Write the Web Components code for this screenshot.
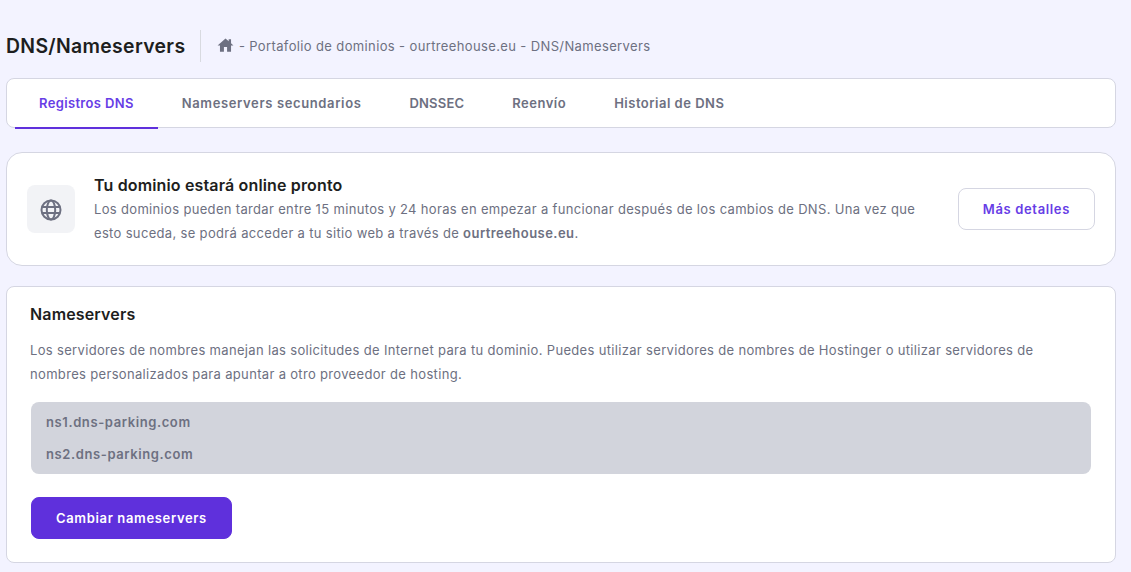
<!DOCTYPE html>
<html lang="es">
<head>
<meta charset="utf-8">
<title>DNS/Nameservers</title>
<style>
html, body { margin: 0; height: 572px; overflow: hidden; background: #f3f3ff; }
body { font-family: Inter, "Noto Sans", sans-serif; color: #6d7081; }
</style>
</head>
<body>
<dns-page></dns-page>

<script>
const FONT = 'Inter, "Noto Sans", sans-serif';

class PageHeader extends HTMLElement {
  constructor() {
    super();
    this.attachShadow({mode: 'open'});
    this.shadowRoot.innerHTML = `
<style>
:host { display: flex; align-items: center; height: 32px; padding-left: 6px; font-family: ${FONT}; }
h1 { margin: 0; font-size: 19.4px; font-weight: 600; letter-spacing: .33px; color: #1d1e20; white-space: nowrap; }
.sep { width: 1px; height: 32px; background: #d8dae0; margin: 0 14.5px 0 15px; }
svg { width: 19px; height: 19px; fill: #6d7081; display: block; margin-right: 4px; margin-top: -2px; }
.crumbs { font-size: 13px; letter-spacing: .37px; color: #6d7081; white-space: nowrap; }
</style>
<h1><slot name="title"></slot></h1>
<div class="sep"></div>
<svg viewBox="0 0 24 24"><path d="M19 9.3V4h-3v2.6L12 3 2 12h3v8h5v-6h4v6h5v-8h3l-3-2.7z"/></svg>
<span class="crumbs"><slot></slot></span>`;
  }
}

class TabBar extends HTMLElement {
  constructor() {
    super();
    this.attachShadow({mode: 'open'});
    this.shadowRoot.innerHTML = `
<style>
:host { display: flex; height: 48px; padding: 0 8px; background: #fff; border: 1px solid #d5d6e2; border-radius: 8px; font-family: ${FONT}; }
</style>
<slot></slot>`;
  }
}

class TabItem extends HTMLElement {
  constructor() {
    super();
    this.attachShadow({mode: 'open'});
    this.shadowRoot.innerHTML = `
<style>
:host { display: flex; align-items: center; justify-content: center; padding: 0 24px; box-sizing: border-box; height: 50px; font-size: 13px; font-weight: 600; letter-spacing: .5px; color: #6d7081; white-space: nowrap; border-bottom: 2px solid transparent; }
:host([active]) { color: #673de6; border-bottom-color: #5f30dc; }
</style>
<slot></slot>`;
  }
}

class NoticeCard extends HTMLElement {
  constructor() {
    super();
    this.attachShadow({mode: 'open'});
    this.shadowRoot.innerHTML = `
<style>
:host { display: flex; align-items: center; box-sizing: border-box; height: 114px; padding: 0 20px; background: #fff; border: 1px solid #d5d6e2; border-radius: 16px; font-family: ${FONT}; }
.icon { flex: none; width: 48px; height: 48px; border-radius: 8px; background: #f2f3f6; display: flex; align-items: center; justify-content: center; margin-right: 19px; }
svg { width: 24px; height: 24px; fill: none; stroke: #6d7081; stroke-width: 2; display: block; margin-top: 2px; }
.body { flex: 1; min-width: 0; }
h3 { margin: 0; font-size: 16px; line-height: 24px; font-weight: 600; letter-spacing: .15px; color: #1d1e20; }
p { margin: 0; font-size: 13px; line-height: 24px; letter-spacing: .33px; color: #6d7081; }
.action { flex: none; }
</style>
<div class="icon">
  <svg viewBox="0 0 24 24"><circle cx="12" cy="12" r="9.5"/><ellipse cx="12" cy="12" rx="4.2" ry="9.5"/><path d="M3.2 9h17.6M3.2 15h17.6"/></svg>
</div>
<div class="body">
  <h3><slot name="title"></slot></h3>
  <p><slot></slot></p>
</div>
<div class="action"><slot name="action"></slot></div>`;
  }
}

class UiButton extends HTMLElement {
  constructor() {
    super();
    this.attachShadow({mode: 'open'});
    this.shadowRoot.innerHTML = `
<style>
:host { display: inline-flex; align-items: center; justify-content: center; box-sizing: border-box; height: 42px; padding: 0 24px; border-radius: 8px; font-family: ${FONT}; font-size: 13px; font-weight: 600; letter-spacing: .65px; white-space: nowrap; cursor: pointer; background: #fff; color: #673de6; border: 1px solid #d5d6e2; }
:host([primary]) { background: #5f30dc; color: #fff; border-color: #5f30dc; margin-left: 1px; }
</style>
<slot></slot>`;
  }
}

class NameserversCard extends HTMLElement {
  constructor() {
    super();
    this.attachShadow({mode: 'open'});
    this.shadowRoot.innerHTML = `
<style>
:host { display: block; box-sizing: border-box; height: 277px; padding: 15px 23px 0; background: #fff; border: 1px solid #d5d6e2; border-radius: 8px; font-family: ${FONT}; }
h3 { margin: 0 0 12px; font-size: 16px; line-height: 24px; font-weight: 600; letter-spacing: .15px; color: #1d1e20; }
p { margin: 0 0 16px; font-size: 13px; line-height: 24px; letter-spacing: .33px; color: #6d7081; }
.list { display: flex; flex-direction: column; justify-content: center; gap: 8px; height: 72px; box-sizing: border-box; padding: 0 15px; margin: 0 1px 23px; background: #d2d4dc; border-radius: 8px; font-size: 13px; line-height: 24px; font-weight: 600; letter-spacing: .6px; color: #6d7081; }
</style>
<h3><slot name="title"></slot></h3>
<p><slot></slot></p>
<div class="list"><slot name="servers"></slot></div>
<slot name="action"></slot>`;
  }
}

class DnsPage extends HTMLElement {
  constructor() {
    super();
    this.attachShadow({mode: 'open'});
    this.shadowRoot.innerHTML = `
<style>
:host { display: block; box-sizing: border-box; padding: 30px 15px 0 6px; }
page-header { margin-left: -6px; margin-bottom: 16px; }
tab-bar { margin-bottom: 24px; }
notice-card { margin-bottom: 20px; }
b { font-weight: 600; letter-spacing: .45px; }
</style>
<page-header>
  <span slot="title">DNS/Nameservers</span>
  - Portafolio de dominios - ourtreehouse.eu - DNS/Nameservers
</page-header>
<tab-bar>
  <tab-item active style="letter-spacing:.35px">Registros DNS</tab-item>
  <tab-item style="letter-spacing:.63px">Nameservers secundarios</tab-item>
  <tab-item style="letter-spacing:.2px">DNSSEC</tab-item>
  <tab-item>Reenvío</tab-item>
  <tab-item>Historial de DNS</tab-item>
</tab-bar>
<notice-card>
  <span slot="title">Tu dominio estará online pronto</span>
  Los dominios pueden tardar entre 15 minutos y 24 horas en empezar a funcionar después de los cambios de DNS. Una vez que<br>esto suceda, se podrá acceder a tu sitio web a través de <b>ourtreehouse.eu</b>.
  <ui-button slot="action">Más detalles</ui-button>
</notice-card>
<nameservers-card>
  <span slot="title">Nameservers</span>
  Los servidores de nombres manejan las solicitudes de Internet para tu dominio. Puedes utilizar servidores de nombres de Hostinger o utilizar servidores de<br>nombres personalizados para apuntar a otro proveedor de hosting.
  <div slot="servers">ns1.dns-parking.com</div>
  <div slot="servers">ns2.dns-parking.com</div>
  <ui-button slot="action" primary>Cambiar nameservers</ui-button>
</nameservers-card>`;
  }
}

customElements.define('page-header', PageHeader);
customElements.define('tab-bar', TabBar);
customElements.define('tab-item', TabItem);
customElements.define('notice-card', NoticeCard);
customElements.define('ui-button', UiButton);
customElements.define('nameservers-card', NameserversCard);
customElements.define('dns-page', DnsPage);
</script>
</body>
</html>
